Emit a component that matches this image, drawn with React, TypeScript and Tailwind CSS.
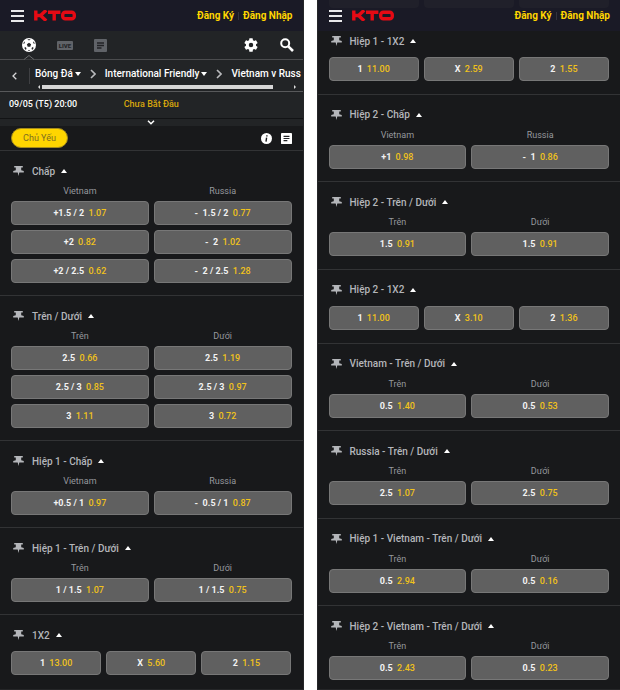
import React from 'react';

type Odd = [label: string, price: string];

interface Market {
  title: string;
  columns?: string[];
  rows: Odd[][];
}

const TEAMS = ['Vietnam', 'Russia'];
const TOTALS = ['Trên', 'Dưới'];

const MAIN_MARKETS: Market[] = [
  {
    title: 'Chấp',
    columns: TEAMS,
    rows: [
      [['+1.5 / 2', '1.07'], ['-  1.5 / 2', '0.77']],
      [['+2', '0.82'], ['-  2', '1.02']],
      [['+2 / 2.5', '0.62'], ['-  2 / 2.5', '1.28']],
    ],
  },
  {
    title: 'Trên / Dưới',
    columns: TOTALS,
    rows: [
      [['2.5', '0.66'], ['2.5', '1.19']],
      [['2.5 / 3', '0.85'], ['2.5 / 3', '0.97']],
      [['3', '1.11'], ['3', '0.72']],
    ],
  },
  { title: 'Hiệp 1 - Chấp', columns: TEAMS, rows: [[['+0.5 / 1', '0.97'], ['-  0.5 / 1', '0.87']]] },
  { title: 'Hiệp 1 - Trên / Dưới', columns: TOTALS, rows: [[['1 / 1.5', '1.07'], ['1 / 1.5', '0.75']]] },
  { title: '1X2', rows: [[['1', '13.00'], ['X', '5.60'], ['2', '1.15']]] },
];

const MORE_MARKETS: Market[] = [
  { title: 'Hiệp 1 - 1X2', rows: [[['1', '11.00'], ['X', '2.59'], ['2', '1.55']]] },
  { title: 'Hiệp 2 - Chấp', columns: TEAMS, rows: [[['+1', '0.98'], ['-  1', '0.86']]] },
  { title: 'Hiệp 2 - Trên / Dưới', columns: TOTALS, rows: [[['1.5', '0.91'], ['1.5', '0.91']]] },
  { title: 'Hiệp 2 - 1X2', rows: [[['1', '11.00'], ['X', '3.10'], ['2', '1.36']]] },
  { title: 'Vietnam - Trên / Dưới', columns: TOTALS, rows: [[['0.5', '1.40'], ['0.5', '0.53']]] },
  { title: 'Russia - Trên / Dưới', columns: TOTALS, rows: [[['2.5', '1.07'], ['2.5', '0.75']]] },
  { title: 'Hiệp 1 - Vietnam - Trên / Dưới', columns: TOTALS, rows: [[['0.5', '2.94'], ['0.5', '0.16']]] },
  { title: 'Hiệp 2 - Vietnam - Trên / Dưới', columns: TOTALS, rows: [[['0.5', '2.43'], ['0.5', '0.23']]] },
];

const Logo = () => (
  <svg viewBox="0 0 42 11" className="w-[42px] h-[11px]" role="img" aria-label="KTO">
    <g fill="none" stroke="#e60a14" strokeWidth="3.4">
      <path d="M1.8 0.5v10M12.2 0.2L6.5 5.5l5.7 5.3M3 5.5h4" />
      <path d="M14 2.2h12.4M20.2 2v8.5" />
      <rect x="28.7" y="2.2" width="11.6" height="6.6" rx="2.6" />
    </g>
  </svg>
);

const Pin = () => (
  <svg viewBox="0 0 11 10" className="w-[11px] h-[10px]" fill="#b4b6ba" aria-hidden="true">
    <path d="M1.2 0h8.6v1.5H8.2v2.7L10.8 5v1.5H6.3L5.5 10l-.8-3.5H.2V5l2.6-.8V1.5H1.2z" />
  </svg>
);

const Caret = ({ down = false }: { down?: boolean }) => (
  <svg viewBox="0 0 6 4" className="w-[6px] h-1" fill="#fff" aria-hidden="true">
    <path d={down ? 'M0 0h6L3 4z' : 'M0 4h6L3 0z'} />
  </svg>
);

const Chevron = () => (
  <svg viewBox="0 0 6 10" className="w-[6px] h-[10px] shrink-0" fill="none" stroke="#b9babd" strokeWidth="1.6" aria-hidden="true">
    <path d="M1 1l4 4-4 4" />
  </svg>
);

const SlipIcon = ({ className }: { className: string }) => (
  <svg viewBox="0 0 13 13" className={className} aria-hidden="true">
    <rect width="13" height="13" rx="1" fill="currentColor" />
    <path d="M3 4h7M3 6.5h7M3 9h4.5" stroke="#222326" strokeWidth="1.3" />
  </svg>
);

const TopBar = ({ scrolled = false }: { scrolled?: boolean }) => (
  <header className="relative flex items-center justify-between h-[31px] shrink-0 pl-[11px] pr-[10px] bg-[#1a1a26]">
    {scrolled && (
      <div className="absolute inset-x-[11px] top-0 grid grid-cols-3 gap-[5px]" aria-hidden="true">
        <span className="h-2 rounded-b bg-[#20202a]" />
        <span className="h-2 rounded-b bg-[#20202a]" />
        <span className="h-2 rounded-b bg-[#20202a]" />
      </div>
    )}
    <div className="relative flex items-center gap-[10px]">
      <button aria-label="Menu" className="flex flex-col gap-[3px] w-[13px]">
        <span className="w-full h-[2px] bg-[#e8e8ea]" />
        <span className="w-full h-[2px] bg-[#e8e8ea]" />
        <span className="w-full h-[2px] bg-[#e8e8ea]" />
      </button>
      <Logo />
    </div>
    <div className="relative flex items-center text-[10px] leading-3 font-bold text-[#ffd500]">
      <a href="#register">Đăng Ký</a>
      <span className="w-px h-2 mx-1 bg-[#33333f]" />
      <a href="#login">Đăng Nhập</a>
    </div>
  </header>
);

const SportNav = () => (
  <nav className="relative flex items-center justify-between h-[29px] pl-[22px] pr-[9px] bg-[#222426] border-b border-[#4b4c4e]">
    <div className="flex items-center gap-[21px]">
      <button aria-label="Bóng Đá">
        <svg viewBox="0 0 14 14" className="w-[14px] h-[14px]">
          <circle cx="7" cy="7" r="7" fill="#fff" />
          <g fill="#252628">
            <path d="M7 4.8l2.1 1.5-.8 2.5H5.7l-.8-2.5z" />
            <path d="M5.3 1.3h3.4L7 2.6zM1 5.8l1.5-2.6.4 2.1zM13 5.8l-1.5-2.6-.4 2.1zM2.6 10.8l.2-2.1 1.7 1.4-.5 1.8zM11.4 10.8l-.2-2.1-1.7 1.4.5 1.8zM6 12.9h2l-1-1.1z" />
          </g>
        </svg>
      </button>
      <button className="w-4 h-[9px] rounded-[1px] bg-[#606368] text-[6px] leading-[9px] font-black text-[#252628]">
        LIVE
      </button>
      <button aria-label="Phiếu cược">
        <SlipIcon className="w-[13px] h-[13px] text-[#606368]" />
      </button>
    </div>
    <div className="flex items-center gap-[22px]">
      <button aria-label="Cài đặt">
        <svg viewBox="2 2 20 20" className="w-[14px] h-[14px]" fill="#fff">
          <path d="M19.14 12.94c.04-.3.06-.61.06-.94 0-.32-.02-.64-.07-.94l2.03-1.58a.49.49 0 0 0 .12-.61l-1.92-3.32a.49.49 0 0 0-.59-.22l-2.39.96c-.5-.38-1.03-.7-1.62-.94l-.36-2.54a.48.48 0 0 0-.48-.41h-3.84a.48.48 0 0 0-.47.41l-.36 2.54c-.59.24-1.13.57-1.62.94l-2.39-.96a.48.48 0 0 0-.59.22L2.74 8.87a.48.48 0 0 0 .12.61l2.03 1.58c-.05.3-.09.63-.09.94s.02.64.07.94l-2.03 1.58a.49.49 0 0 0-.12.61l1.92 3.32c.12.22.37.29.59.22l2.39-.96c.5.38 1.03.7 1.62.94l.36 2.54c.05.24.24.41.48.41h3.84c.24 0 .44-.17.47-.41l.36-2.54c.59-.24 1.13-.56 1.62-.94l2.39.96c.22.08.47 0 .59-.22l1.92-3.32a.48.48 0 0 0-.12-.61zM12 15.2A3.2 3.2 0 1 1 12 8.8a3.2 3.2 0 0 1 0 6.4z" />
        </svg>
      </button>
      <button aria-label="Tìm kiếm">
        <svg viewBox="0 0 14 14" className="w-[14px] h-[14px]" fill="none" stroke="#fff">
          <circle cx="5.2" cy="5.2" r="4" strokeWidth="2" />
          <path d="M8.3 8.3l4.7 4.7" strokeWidth="2.6" />
        </svg>
      </button>
    </div>
    {/* notch under the active sport */}
    <svg viewBox="0 0 10 5" className="absolute left-6 -bottom-px w-[10px] h-[5px]" aria-hidden="true">
      <path d="M0 4.5L5 .5l5 4" fill="#252628" stroke="#6a6b6d" />
    </svg>
  </nav>
);

const Breadcrumbs = () => (
  <div className="flex items-center h-8 pl-3 bg-[#222426] border-b border-[#58595b]">
    <button aria-label="Quay lại" className="shrink-0">
      <svg viewBox="0 0 5 8" className="w-[5px] h-2" fill="none" stroke="#d5d5d7" strokeWidth="1.3">
        <path d="M4.3.7L1 4l3.3 3.3" />
      </svg>
    </button>
    <span className="w-px h-4 ml-3 shrink-0 bg-[#3f4043]" />
    <div className="flex-1 min-w-0 pt-1 pl-[5px] pr-1">
      <div className="flex items-center h-[18px] gap-[9px] text-[10px] font-medium text-white whitespace-nowrap">
        <button className="flex items-center gap-[2px] shrink-0">Bóng Đá <Caret down /></button>
        <Chevron />
        <button className="flex items-center gap-[2px] shrink-0">International Friendly <Caret down /></button>
        <Chevron />
        <span>Vietnam v Russ</span>
      </div>
      <div className="flex items-center h-2 px-[3px]" aria-hidden="true">
        <svg viewBox="0 0 2 4" className="w-[2px] h-1" fill="#ddd"><path d="M2 0v4L0 2z" /></svg>
        <span className="flex-1 h-[4px] ml-[2px] mr-[21px] bg-[#d6d6d6]" />
        <svg viewBox="0 0 2 4" className="w-[2px] h-1" fill="#ddd"><path d="M0 0v4l2-2z" /></svg>
      </div>
    </div>
  </div>
);

const MatchInfo = () => (
  <div className="bg-[#222426]">
    <div className="grid grid-cols-3 items-center h-[26px] px-[9px] text-[9px] font-medium">
      <span className="text-white">09/05 (T5) 20:00</span>
      <span className="text-center text-[#d9a80c]">Chưa Bắt Đầu</span>
    </div>
    <button aria-label="Mở rộng" className="flex w-full items-center justify-center h-2 border-t border-[#121315]">
      <svg viewBox="0 0 8 5" className="w-2 h-[5px]" fill="none" stroke="#fff" strokeWidth="1.5">
        <path d="M1 .8l3 3 3-3" />
      </svg>
    </button>
  </div>
);

const FilterBar = () => (
  <div className="flex items-center justify-between h-6 px-[11px]">
    <button className="w-[57px] h-5 rounded-full border border-[#a58c1c] bg-[#ffd500] text-[9px] leading-3 text-[#7d6d22]">
      Chủ Yếu
    </button>
    <div className="flex items-center gap-[9px] text-white">
      <button aria-label="Thông tin">
        <svg viewBox="0 0 11 11" className="w-[11px] h-[11px]">
          <circle cx="5.5" cy="5.5" r="5.5" fill="#fff" />
          <path d="M5.9 2.2v1.4M5.6 4.6L5 8.6" stroke="#18191b" strokeWidth="1.4" />
        </svg>
      </button>
      <button aria-label="Phiếu cược">
        <SlipIcon className="w-[11px] h-[11px]" />
      </button>
    </div>
  </div>
);

const OddButton = ({ odd: [label, price] }: { odd: Odd }) => (
  <button className="h-6 rounded border border-[#777] bg-[#606060] text-[9px] leading-3 font-bold text-[#f2f2f2] whitespace-pre">
    {label} <span className="ml-[2px] font-medium text-[#f0c21b]">{price}</span>
  </button>
);

const MarketSection = ({ market, className = '' }: { market: Market; className?: string }) => (
  <section className={`px-[11px] pb-3 border-t border-[#323335] ${className}`}>
    <button className="flex items-center h-5 px-[2px] text-[10px] font-medium text-[#b4b6ba]">
      <Pin />
      <span className="ml-2 mr-[6px]">{market.title}</span>
      <Caret />
    </button>
    {market.columns && (
      <div className="grid grid-cols-2 gap-[5px] mt-1 text-center text-[9px] leading-3 text-[#96989d]">
        {market.columns.map((c) => (
          <span key={c}>{c}</span>
        ))}
      </div>
    )}
    <div className={market.columns ? 'grid grid-cols-2 gap-[5px] mt-1' : 'grid grid-cols-3 gap-[5px] mt-[6px]'}>
      {market.rows.flat().map((odd, i) => (
        <OddButton key={i} odd={odd} />
      ))}
    </div>
  </section>
);

const App: React.FC = () => {
  return (
    <div className="grid grid-cols-2 gap-[13px] min-h-screen bg-white font-['Roboto',sans-serif]">
      <div className="flex flex-col bg-[#18191b] border-r border-b border-[#252628]">
        <TopBar />
        <SportNav />
        <Breadcrumbs />
        <MatchInfo />
        <FilterBar />
        {MAIN_MARKETS.map((m) => (
          <MarketSection key={m.title} market={m} className="pt-[10px]" />
        ))}
      </div>
      <div className="flex flex-col bg-[#18191b] border-l border-b border-[#252628]">
        <TopBar scrolled />
        {MORE_MARKETS.map((m, i) => (
          <MarketSection key={m.title} market={m} className={i === 0 ? 'grow border-t-0' : 'grow pt-[10px] last:pb-2'} />
        ))}
      </div>
    </div>
  );
};

export default App;
